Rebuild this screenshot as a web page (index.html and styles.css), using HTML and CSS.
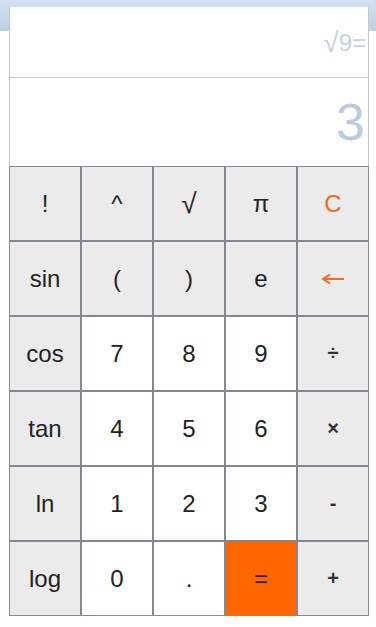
FILE: index.html
```html
<!DOCTYPE html>
<html lang="en">

<head>
    <title>Calculator</title>
    <meta charset="UTF-8">
    <meta name="viewport" content="width=device-width, initial-scale=1">
    <link rel="stylesheet" href="styles.css">
</head>

<body>
    <div class="calc">
        <div class="expr"><span class="sq">√</span>9=</div>
        <div class="result">3</div>
        <div class="keys">
            <div class="key fn">!</div>
            <div class="key fn">^</div>
            <div class="key fn root">√</div>
            <div class="key fn">π</div>
            <div class="key fn warn">C</div>

            <div class="key fn">sin</div>
            <div class="key fn">(</div>
            <div class="key fn">)</div>
            <div class="key fn">e</div>
            <div class="key fn warn" title="←">
                <svg width="24" height="12" viewBox="0 0 24 12">
                    <path d="M2 6 H23 M9 1.5 L2 6 L9 10.5" fill="none" stroke="#f26a1b" stroke-width="2"/>
                </svg>
            </div>

            <div class="key fn">cos</div>
            <div class="key">7</div>
            <div class="key">8</div>
            <div class="key">9</div>
            <div class="key fn op">÷</div>

            <div class="key fn">tan</div>
            <div class="key">4</div>
            <div class="key">5</div>
            <div class="key">6</div>
            <div class="key fn op">×</div>

            <div class="key fn">ln</div>
            <div class="key">1</div>
            <div class="key">2</div>
            <div class="key">3</div>
            <div class="key fn op">-</div>

            <div class="key fn">log</div>
            <div class="key">0</div>
            <div class="key">.</div>
            <div class="key eq">=</div>
            <div class="key fn op">+</div>
        </div>
    </div>
</body>

</html>
```

FILE: styles.css
```css
body {
    margin: 0;
    font-family: "Liberation Sans", Arial, sans-serif;
    background: linear-gradient(#d3e0f0, #bccfe6 31px, #ffffff 31px);
    height: 627px;
    overflow: hidden;
}

.calc {
    width: 358px;
    margin: 7px 0 0 9px;
    border-left: 1px solid #c4c8cc;
    border-right: 1px solid #c4c8cc;
    background: #fff;
}

.expr {
    height: 69px;
    border-top: 1px solid #fdf8ea;
    border-bottom: 1px solid #c9c9c9;
    display: flex;
    align-items: center;
    justify-content: flex-end;
    padding-right: 2px;
    font-size: 24px;
    color: #c3d2e2;
}

.expr .sq {
    font-size: 28px;
}

.result {
    height: 88px;
    display: flex;
    align-items: center;
    justify-content: flex-end;
    padding-right: 3px;
    font-size: 52px;
    color: #b8cbe0;
}

.keys {
    margin-left: -1px;
    width: 358px;
    border: 1px solid #848d97;
    background: #7f8994;
    display: grid;
    grid-template-columns: repeat(5, 70px);
    grid-auto-rows: 73px;
    gap: 2px;
}

.key {
    background: #fff;
    display: flex;
    align-items: center;
    justify-content: center;
    font-size: 24px;
    color: #222;
}

.key.fn {
    background: #ebebeb;
}

.key.root {
    font-size: 28px;
}

.key.warn {
    color: #f26a1b;
}

.key.op {
    font-size: 20px;
    font-weight: bold;
    color: #333;
}

.key.eq {
    background: #ff6600;
    color: #3a2010;
}
```
